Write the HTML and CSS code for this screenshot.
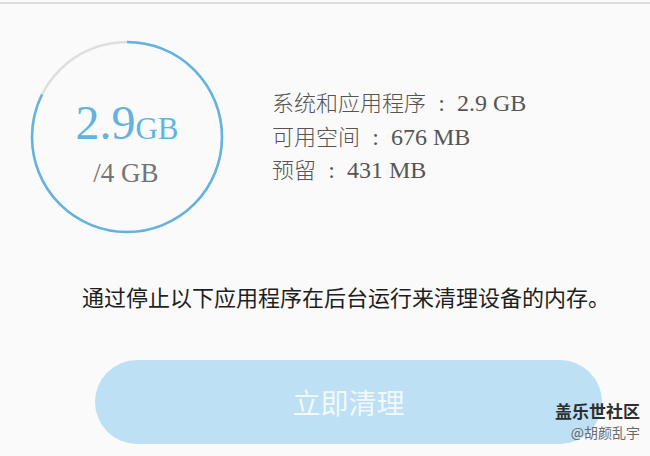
FILE: index.html
```html
<!DOCTYPE html>
<html lang="zh-CN">
<head>
<meta charset="utf-8">
<link rel="stylesheet" href="styles.css">
</head>
<body>
<div class="page">
  <div class="topline"></div>
  <div class="summary">
    <div class="gauge">
      <svg class="ring" width="200" height="200" viewBox="0 0 200 200">
        <circle cx="100" cy="100" r="95" fill="none" stroke="#dedede" stroke-width="2.5"/>
        <circle cx="100" cy="100" r="95" fill="none" stroke="#62b3df" stroke-width="2.5"
          stroke-dasharray="491 597" stroke-dashoffset="0" transform="rotate(-90 100 100)"/>
      </svg>
      <div class="gauge-text">
        <div class="used"><span class="num">2.9</span><span class="unit">GB</span></div>
        <div class="total">/4 GB</div>
      </div>
    </div>
    <div class="stats">
      <div class="stat">系统和应用程序<span class="colon">:</span><span class="lat">2.9 GB</span></div>
      <div class="stat">可用空间<span class="colon">:</span><span class="lat">676 MB</span></div>
      <div class="stat">预留<span class="colon">:</span><span class="lat">431 MB</span></div>
    </div>
  </div>
  <p class="note">通过停止以下应用程序在后台运行来清理设备的内存。</p>
  <div class="btn-row">
    <div class="clean-btn">立即清理</div>
  </div>
  <div class="watermark">
    <div class="wm-title">盖乐世社区</div>
    <div class="wm-user">@胡颜乱宇</div>
  </div>
</div>
</body>
</html>
```
FILE: styles.css
```css
html, body {
  margin: 0;
  padding: 0;
  background: #fafafa;
}
.page {
  position: relative;
  width: 650px;
  height: 456px;
  overflow: hidden;
  background: #fafafa;
  font-family: "Liberation Serif", "Noto Sans CJK SC", serif;
}
.topline {
  margin-top: 2px;
  height: 2px;
  background: #dcdcdc;
}
.summary {
  display: flex;
  align-items: flex-start;
  padding-left: 27px;
  padding-top: 33px;
}
.gauge {
  display: grid;
  width: 200px;
  height: 200px;
}
.ring, .gauge-text {
  grid-area: 1 / 1;
}
.gauge-text {
  display: flex;
  flex-direction: column;
  align-items: center;
  padding-top: 61px;
}
.used {
  color: #62b3df;
  line-height: 50px;
  height: 50px;
}
.num {
  font-size: 48px;
}
.unit {
  font-size: 31px;
}
.total {
  color: #757575;
  font-size: 27px;
  line-height: 30px;
  margin-top: 10px;
  padding-right: 2px;
}
.stats {
  padding-left: 45px;
  padding-top: 48px;
  color: #555;
  font-size: 22px;
}
.stat {
  line-height: 33.5px;
  height: 33.5px;
  white-space: nowrap;
  font-family: "Noto Sans CJK SC", sans-serif;
  font-weight: 300;
}
.colon {
  display: inline-block;
  width: 31px;
  text-align: center;
  font-family: "Liberation Serif", serif;
  font-weight: 400;
  font-size: 24px;
}
.lat {
  font-family: "Liberation Serif", serif;
  font-weight: 400;
  font-size: 24px;
}
.note {
  margin: 44px 0 0 82px;
  font-family: "Noto Sans CJK SC", sans-serif;
  font-size: 22px;
  line-height: 30px;
  color: #1e1e1e;
  white-space: nowrap;
}
.btn-row {
  padding-left: 95px;
  margin-top: 49px;
}
.clean-btn {
  width: 507px;
  height: 84px;
  border-radius: 42px;
  background: #bde0f5;
  color: #f2f8fc;
  font-family: "Noto Sans CJK SC", sans-serif;
  font-size: 28px;
  display: flex;
  align-items: center;
  justify-content: center;
}
.watermark {
  position: absolute;
  right: 10px;
  top: 400px;
  text-align: right;
  font-family: "Noto Sans CJK SC", sans-serif;
}
.wm-title {
  font-size: 17px;
  line-height: 22px;
  font-weight: 700;
  color: #2e2e2e;
}
.wm-user {
  font-size: 14px;
  line-height: 20px;
  color: #6a6a6a;
}
```
